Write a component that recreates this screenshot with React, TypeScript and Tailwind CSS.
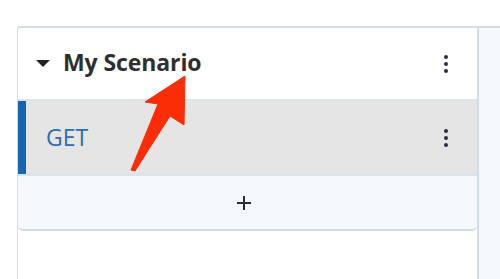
import React from "react";

function Dots() {
  return (
    <div className="flex flex-col items-center gap-[3px]">
      <span className="block h-[4px] w-[4px] rounded-full bg-[#2b2b45]" />
      <span className="block h-[4px] w-[4px] rounded-full bg-[#2b2b45]" />
      <span className="block h-[4px] w-[4px] rounded-full bg-[#2b2b45]" />
    </div>
  );
}

export default function App() {
  return (
    <div
      className="relative flex h-[279px] w-[500px] overflow-hidden bg-white pl-[17px] pt-[26px]"
      style={{ fontFamily: '"Open Sans", "Liberation Sans", sans-serif' }}
    >
      <div className="flex w-[462px] shrink-0 flex-col rounded-tl-[3px] border-l border-r-2 border-t-2 border-[#d0deea]">
        {/* header */}
        <div className="flex h-[73px] items-center border-b-2 border-[#d8e4ee] pl-[18px] pr-[29px]">
          <svg width="14" height="8" viewBox="0 0 14 8" className="mr-[13px] mt-[1px]">
            <polygon points="0,0 14,0 7,7" fill="#222" />
          </svg>
          <span className="-mt-[2px] text-[23px] font-bold tracking-[-0.1px] text-[#2f2f2f]">My Scenario</span>
          <div className="ml-auto">
            <Dots />
          </div>
        </div>

        {/* GET row */}
        <div className="flex h-[75px] items-center border-b-2 border-[#d8e4ee] bg-[#e5e5e5] pr-[29px]">
          <div className="h-full w-[8px] bg-[#1565b0]" />
          <span className="ml-[20px] text-[23px] text-[#2f6db0]">GET</span>
          <div className="ml-auto">
            <Dots />
          </div>
        </div>

        {/* add row */}
        <div className="flex h-[55px] items-center justify-center rounded-b-[5px] border-b-2 border-[#d0deea] bg-[#f5f9fd]">
          <svg width="14" height="14" viewBox="0 0 14 14" className="mr-[8px]">
            <path d="M7 0V14M0 7H14" stroke="#2b2b45" strokeWidth="2" />
          </svg>
        </div>

        <div className="flex-1 bg-white" />
      </div>

      <div className="flex-1 border-t-2 border-[#d0deea] bg-[#f5f9fd]" />

      {/* annotation arrow */}
      <svg className="absolute left-0 top-0" width="500" height="279" viewBox="0 0 500 279">
        <polygon
          points="185,76 145,102 158,104 131,170 135,171 170,116 184,125"
          fill="#fb2d06"
          stroke="#fb2d06"
          strokeWidth="1"
          strokeLinejoin="round"
        />
      </svg>
    </div>
  );
}
